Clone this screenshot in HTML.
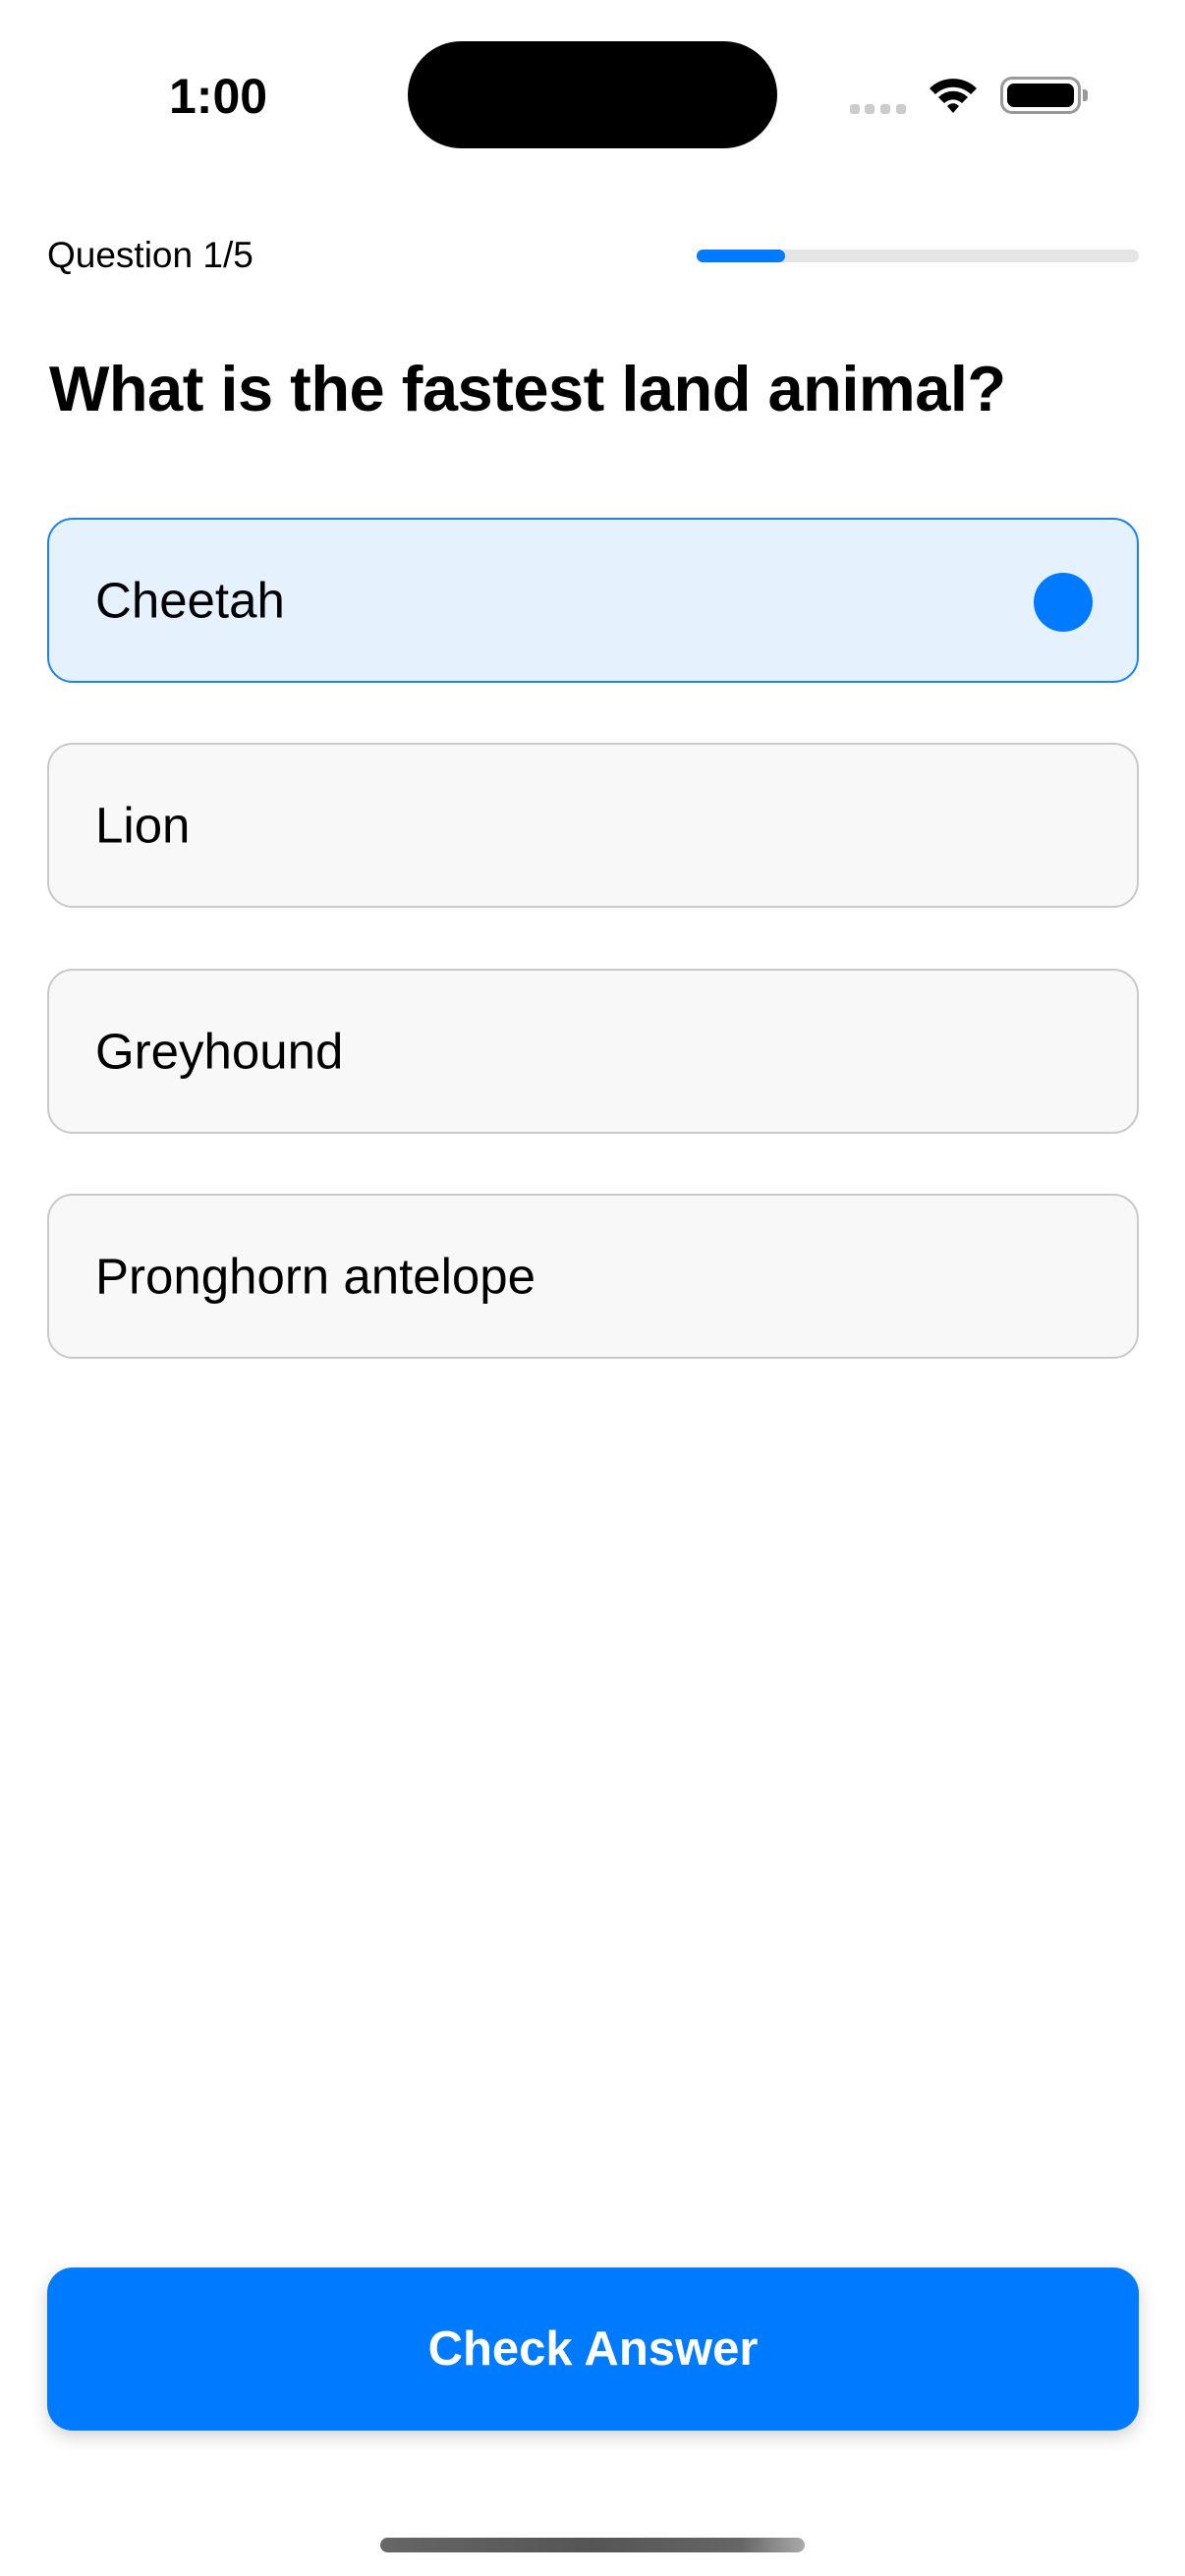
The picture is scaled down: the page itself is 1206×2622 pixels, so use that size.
<!DOCTYPE html>
<html><head><meta charset="utf-8">
<style>
html,body{margin:0;padding:0;background:#fff;}
body{width:1206px;height:2622px;position:relative;overflow:hidden;font-family:"Liberation Sans",sans-serif;color:#000;}
.abs{position:absolute;}
.opt{position:absolute;left:48px;width:1111px;height:168px;border:2px solid #c9c9cb;border-radius:26px;background:#f8f8f8;box-sizing:border-box;}
.opt span{position:absolute;left:47px;top:50%;transform:translateY(-50%);font-size:51px;line-height:1;}
</style></head><body>
<div class="abs" style="left:172px;top:70px;font-size:50px;font-weight:bold;line-height:56px;">1:00</div>
<div class="abs" style="left:415px;top:42px;width:376px;height:109px;border-radius:55px;background:#000;"></div>
<div class="abs" style="left:865px;top:106px;width:10px;height:10px;border-radius:3px;background:#ccc;"></div>
<div class="abs" style="left:880px;top:106px;width:10px;height:10px;border-radius:3px;background:#ccc;"></div>
<div class="abs" style="left:896px;top:106px;width:10px;height:10px;border-radius:3px;background:#ccc;"></div>
<div class="abs" style="left:912px;top:106px;width:10px;height:10px;border-radius:3px;background:#ccc;"></div>
<svg class="abs" style="left:944px;top:76px" width="52" height="40" viewBox="0 0 52 40">
<path d="M2 14 A34 34 0 0 1 50 14 L44 20 A26 26 0 0 0 8 20 Z" fill="#000"/>
<path d="M11 23 A21 21 0 0 1 41 23 L35 29 A13 13 0 0 0 17 29 Z" fill="#000"/>
<path d="M20 32 A8 8 0 0 1 32 32 L26 39 Z" fill="#000"/>
</svg>
<div class="abs" style="left:1018px;top:78px;width:82px;height:38px;border:3px solid #999;border-radius:12px;box-sizing:border-box;"></div>
<div class="abs" style="left:1025px;top:85px;width:68px;height:24px;border-radius:7px;background:#000;"></div>
<div class="abs" style="left:1102px;top:91px;width:5px;height:12px;border-radius:0 3px 3px 0;background:#999;"></div>

<div class="abs" style="left:48px;top:239px;font-size:37px;line-height:42px;">Question 1/5</div>
<div class="abs" style="left:709px;top:254px;width:450px;height:13px;border-radius:7px;background:#e5e5e5;"></div>
<div class="abs" style="left:709px;top:254px;width:90px;height:13px;border-radius:7px;background:#007aff;"></div>

<div class="abs" style="left:50px;top:358px;font-size:65px;font-weight:bold;line-height:76px;letter-spacing:-0.5px;">What is the fastest land animal?</div>

<div class="opt" style="top:527px;border-color:#1a82f7;background:#e6f1fe;"><span>Cheetah</span>
<div class="abs" style="left:1002px;top:54px;width:60px;height:60px;border-radius:50%;background:#007aff;"></div></div>
<div class="opt" style="top:756px;"><span>Lion</span></div>
<div class="opt" style="top:986px;"><span>Greyhound</span></div>
<div class="opt" style="top:1215px;"><span>Pronghorn antelope</span></div>

<div class="abs" style="left:48px;top:2308px;width:1111px;height:166px;border-radius:26px;background:#007aff;box-shadow:0 6px 18px rgba(0,0,0,0.18);color:#fff;font-size:49px;font-weight:bold;text-align:center;line-height:166px;">Check Answer</div>
<div class="abs" style="left:387px;top:2583px;width:432px;height:15px;border-radius:8px;background:linear-gradient(90deg,#666,#555 50%,#666 85%,#aaa);"></div>
</body></html>
